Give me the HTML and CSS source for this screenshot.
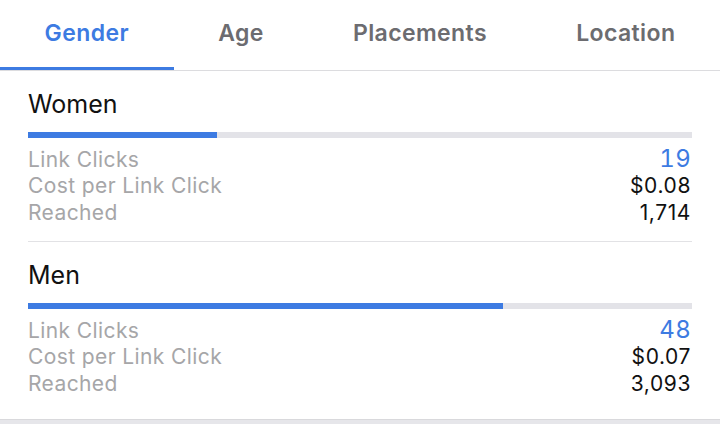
FILE: index.html
```html
<!DOCTYPE html>
<html lang="en">
<head>
<meta charset="utf-8">
<title>Gender breakdown</title>
<link rel="stylesheet" href="styles.css">
</head>
<body>
<div class="screen">
  <nav class="tabs">
    <div class="tab active">Gender</div>
    <div class="tab">Age</div>
    <div class="tab">Placements</div>
    <div class="tab">Location</div>
  </nav>
  <div class="list">
    <section class="group">
      <h2 class="title">Women</h2>
      <div class="track"><div class="fill" style="width:28.4%"></div></div>
      <div class="row"><span class="label">Link Clicks</span><span class="value link">19</span></div>
      <div class="row"><span class="label">Cost per Link Click</span><span class="value">$0.08</span></div>
      <div class="row"><span class="label">Reached</span><span class="value">1,714</span></div>
    </section>
    <section class="group last">
      <h2 class="title">Men</h2>
      <div class="track"><div class="fill" style="width:71.6%"></div></div>
      <div class="row"><span class="label">Link Clicks</span><span class="value link">48</span></div>
      <div class="row"><span class="label">Cost per Link Click</span><span class="value">$0.07</span></div>
      <div class="row"><span class="label">Reached</span><span class="value">3,093</span></div>
    </section>
  </div>
  <div class="footer"></div>
</div>
</body>
</html>
```
FILE: styles.css
```css
* { box-sizing: border-box; }
html, body { margin: 0; padding: 0; }
body {
  width: 720px;
  height: 424px;
  overflow: hidden;
  background: #fff;
  font-family: Inter, "Noto Sans", "Liberation Sans", sans-serif;
  color: #111;
}
.screen {
  display: flex;
  flex-direction: column;
  height: 424px;
}
.tabs {
  display: flex;
  border-bottom: 1px solid #dcdcdf;
}
.tab {
  flex: 1 1 auto;
  height: 70px;
  display: flex;
  align-items: center;
  justify-content: center;
  padding-top: 1px;
  padding-bottom: 2px;
  border-bottom: 3px solid transparent;
  font-size: 23px;
  font-weight: 600;
  letter-spacing: 0.4px;
  color: #6c6c70;
  white-space: nowrap;
}
.tab.active {
  color: #3d7be2;
  border-bottom-color: #3d7be2;
}
.list {
  flex: 1 1 auto;
}
.group {
  margin: 0 28px;
  padding: 18px 0 15px;
  border-bottom: 1px solid #e2e2e5;
}
.group.last {
  border-bottom: none;
  padding-bottom: 0;
}
.title {
  margin: 0;
  font-size: 25px;
  line-height: 30px;
  font-weight: 400;
  color: #111;
}
.track {
  margin: 13px 0 7px;
  height: 6px;
  background: #e3e3e8;
}
.fill {
  height: 100%;
  background: #3d7be2;
}
.row {
  display: flex;
  justify-content: space-between;
  align-items: baseline;
  height: 27px;
  line-height: 27px;
}
.label {
  font-size: 21px;
  letter-spacing: 0.4px;
  color: #a6a6a8;
}
.value {
  font-size: 21px;
  letter-spacing: 0.6px;
  color: #111;
  margin-right: 1px;
}
.value.link {
  font-size: 24px;
  letter-spacing: 0.3px;
  font-variant-numeric: tabular-nums;
  color: #3d7be2;
}
.footer {
  height: 5px;
  background: #e6e6ea;
  border-top: 1px solid #d9d9dc;
}
```
